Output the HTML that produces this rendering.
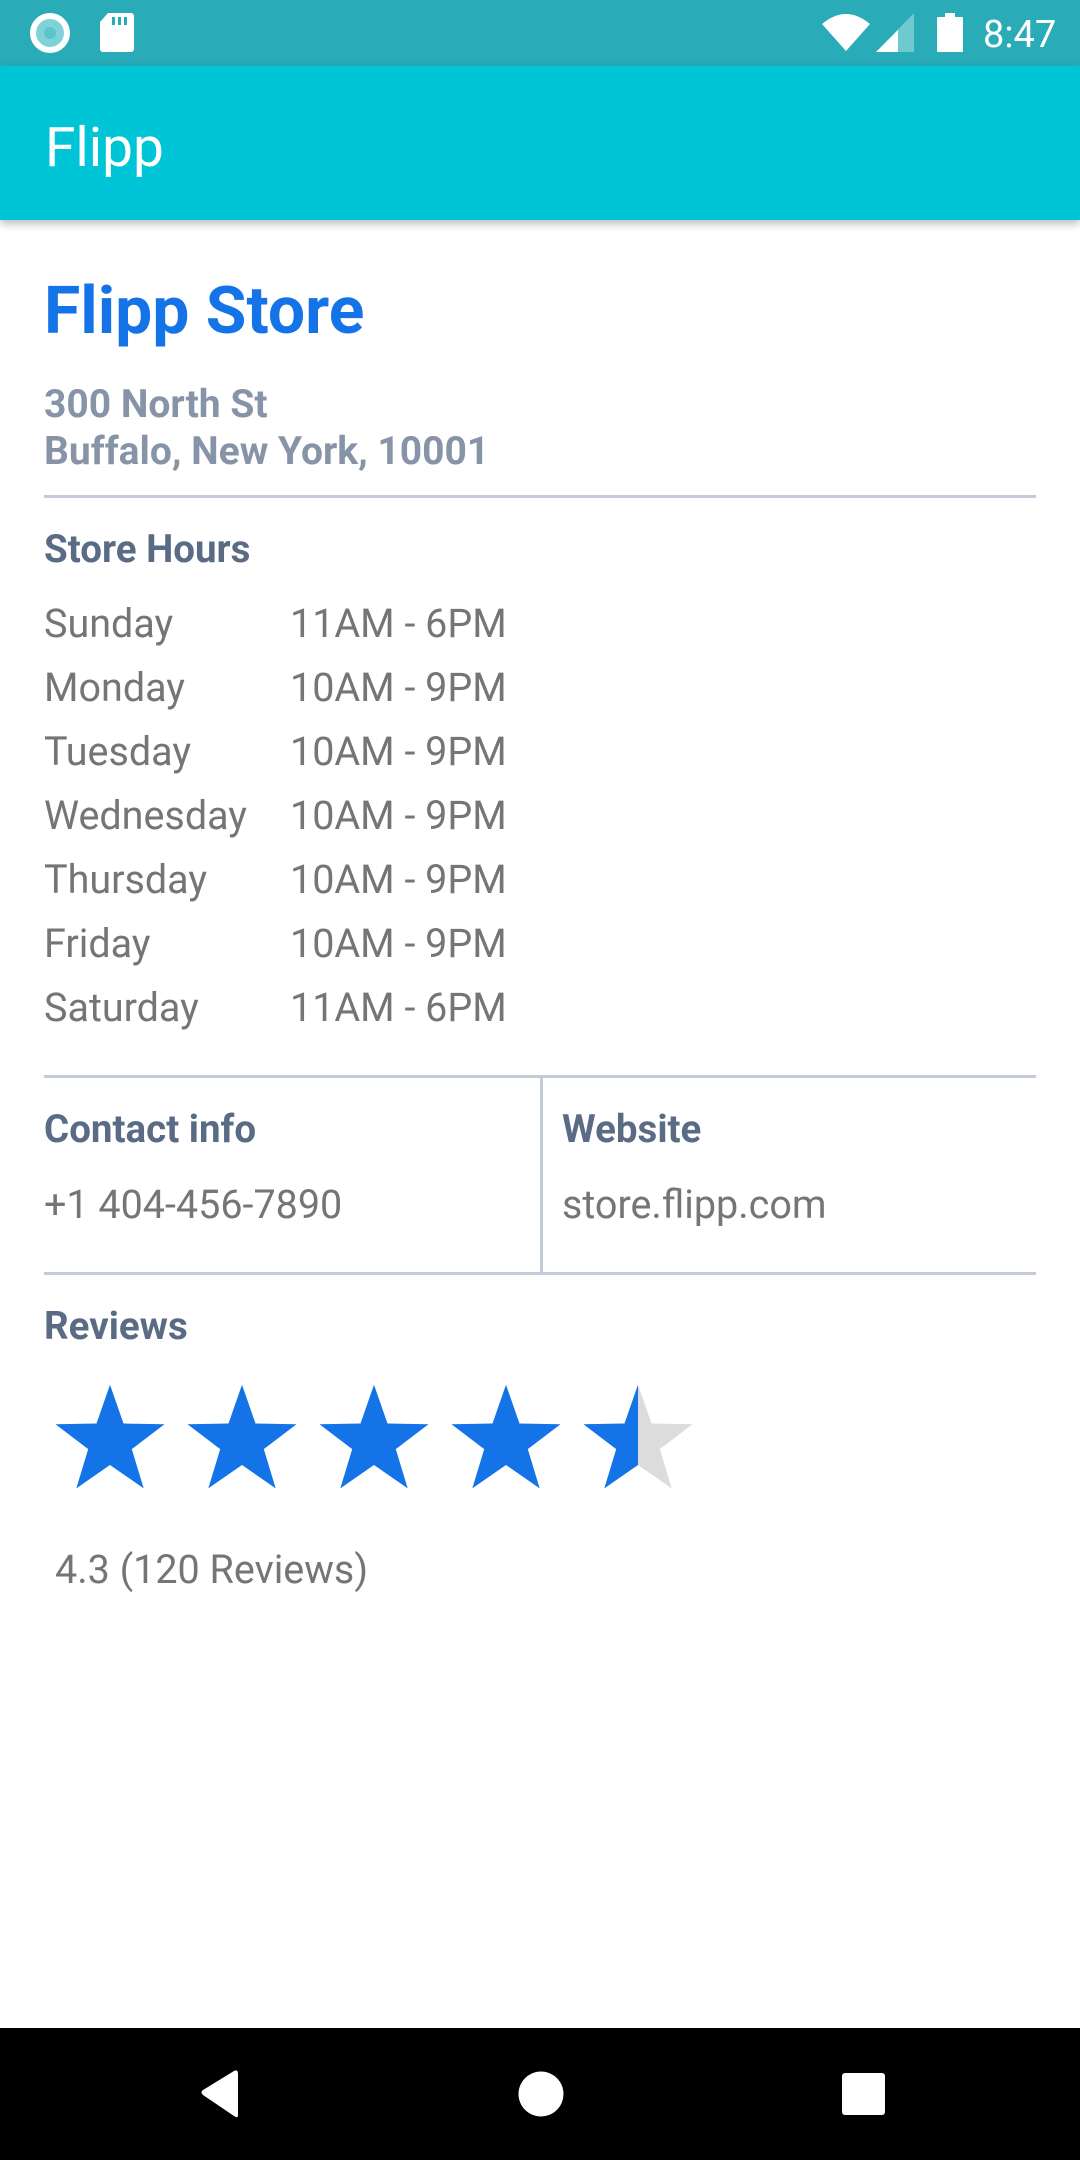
<!DOCTYPE html>
<html><head><meta charset="utf-8"><style>
*{margin:0;padding:0;box-sizing:border-box}
body{width:1080px;height:2160px;background:#fff;position:relative;overflow:hidden;font-family:"Roboto","Liberation Sans",sans-serif}
.a{position:absolute;white-space:nowrap}
.sb{left:0;top:0;width:1080px;height:66px;background:#2AABB8}
.ab{left:0;top:66px;width:1080px;height:154px;background:#00C5D6;box-shadow:0 4px 8px rgba(0,0,0,.25)}
.hd{color:#5A6B85;font-weight:bold;font-size:38.5px}
.tx{color:#757575;font-size:39.5px}
.hr{background:#C3CCD8;height:3px;left:44px;width:992px}
</style></head><body>
<div class="a sb"></div>
<svg class="a" style="left:0;top:0" width="1080" height="66">
<circle cx="50" cy="33" r="17" fill="#7FD3D8" stroke="#fff" stroke-width="6"/>
<circle cx="50" cy="33" r="6" fill="#5FC3CB"/>
<path d="M108 13h23a3 3 0 0 1 3 3v33a3 3 0 0 1-3 3h-28a3 3 0 0 1-3-3V22z" fill="#fff"/>
<rect x="112" y="17" width="3" height="8" fill="#2AABB8"/><rect x="118" y="17" width="3" height="8" fill="#2AABB8"/><rect x="124" y="17" width="3" height="8" fill="#2AABB8"/>
<path d="M822 24Q846 4 870 24L846 51Z" fill="#fff"/>
<path d="M876 52L914 13V52Z" fill="#6FC9CF"/>
<path d="M876 52L898 30V52Z" fill="#fff"/>
<rect x="945" y="13" width="10" height="5" fill="#fff"/>
<rect x="937" y="17" width="26" height="35" rx="1" fill="#fff"/>
<text x="983" y="47" font-size="38" fill="#fff" font-family="Roboto,'Liberation Sans',sans-serif">8:47</text>
</svg>
<div class="a ab"></div>
<div class="a" style="left:45px;top:115px;font-size:55px;color:#fff;line-height:66px">Flipp</div>

<div class="a" style="left:44px;top:272px;font-size:66px;font-weight:bold;color:#1473E6;line-height:80px">Flipp Store</div>
<div class="a" style="left:44px;top:381px;font-size:39px;font-weight:bold;color:#8794A8;line-height:47px">300 North St<br>Buffalo, New York, 10001</div>
<div class="a hr" style="top:495px"></div>

<div class="a hd" style="left:44px;top:525px;line-height:50px">Store Hours</div>
<div class="a tx" style="left:44px;top:592px;line-height:64px">Sunday<br>Monday<br>Tuesday<br>Wednesday<br>Thursday<br>Friday<br>Saturday</div>
<div class="a tx" style="left:290px;top:592px;line-height:64px">11AM - 6PM<br>10AM - 9PM<br>10AM - 9PM<br>10AM - 9PM<br>10AM - 9PM<br>10AM - 9PM<br>11AM - 6PM</div>

<div class="a hr" style="top:1075px"></div>
<div class="a" style="left:540px;top:1075px;width:3px;height:200px;background:#C3CCD8"></div>
<div class="a hd" style="left:44px;top:1105px;line-height:50px">Contact info</div>
<div class="a hd" style="left:562px;top:1105px;line-height:50px">Website</div>
<div class="a tx" style="left:44px;top:1179px;line-height:52px">+1 404-456-7890</div>
<div class="a tx" style="left:562px;top:1179px;line-height:52px">store.flipp.com</div>
<div class="a hr" style="top:1272px"></div>

<div class="a hd" style="left:44px;top:1302px;line-height:50px">Reviews</div>
<svg class="a" style="left:0;top:1380px" width="760" height="115">
<defs>
<path id="s" d="M0 -57.3L13.5 -18.5L54.5 -17.7L21.8 7.1L33.7 46.4L0 23L-33.7 46.4L-21.8 7.1L-54.5 -17.7L-13.5 -18.5Z"/>
<clipPath id="c"><rect x="-60" y="-60" width="60" height="120"/></clipPath>
</defs>
<use href="#s" x="110" y="62" fill="#1473E6"/>
<use href="#s" x="242" y="62" fill="#1473E6"/>
<use href="#s" x="374" y="62" fill="#1473E6"/>
<use href="#s" x="506" y="62" fill="#1473E6"/>
<g transform="translate(638,62)"><use href="#s" fill="#DCDCDC"/><use href="#s" fill="#1473E6" clip-path="url(#c)"/></g>
</svg>
<div class="a tx" style="left:55px;top:1544px;line-height:52px">4.3 (120 Reviews)</div>

<div class="a" style="left:0;top:2028px;width:1080px;height:132px;background:#000"></div>
<svg class="a" style="left:0;top:2028px" width="1080" height="132">
<path d="M238 46L238 87Q238 91 234 88L203 67Q200 64 203 62L234 43Q238 41 238 46Z" fill="#fff"/>
<circle cx="541" cy="66" r="22.5" fill="#fff"/>
<rect x="842" y="45" width="43" height="42" rx="3" fill="#fff"/>
</svg>
</body></html>
